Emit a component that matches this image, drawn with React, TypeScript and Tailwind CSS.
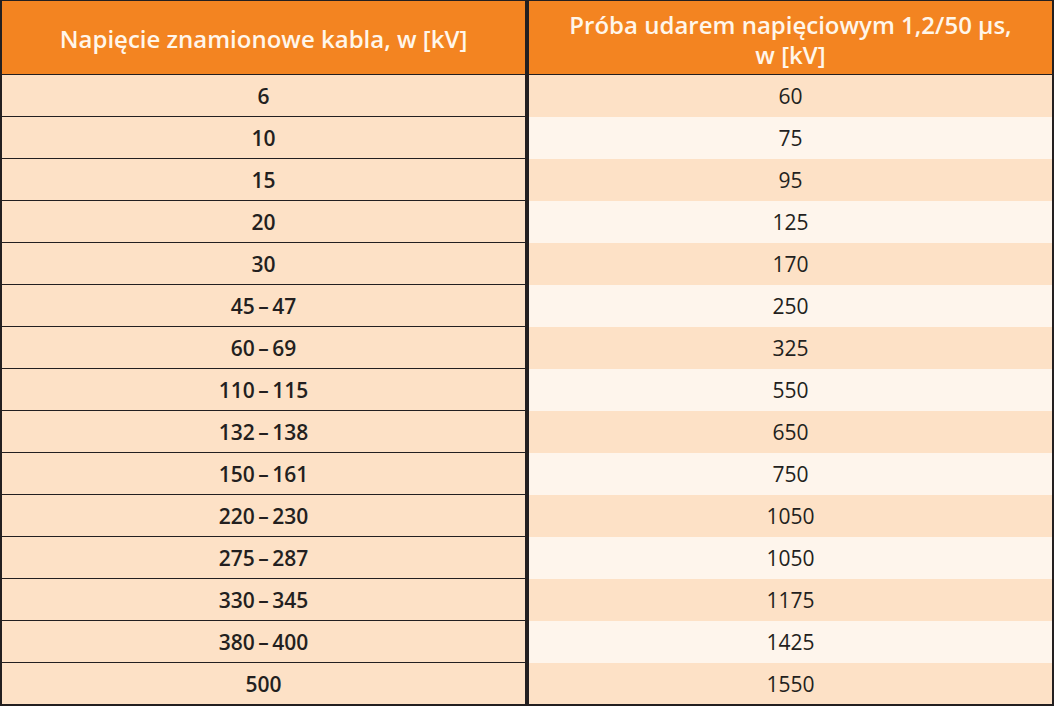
const rows: [string, string][] = [
  ["6", "60"],
  ["10", "75"],
  ["15", "95"],
  ["20", "125"],
  ["30", "170"],
  ["45\u2009–\u200947", "250"],
  ["60\u2009–\u200969", "325"],
  ["110\u2009–\u2009115", "550"],
  ["132\u2009–\u2009138", "650"],
  ["150\u2009–\u2009161", "750"],
  ["220\u2009–\u2009230", "1050"],
  ["275\u2009–\u2009287", "1050"],
  ["330\u2009–\u2009345", "1175"],
  ["380\u2009–\u2009400", "1425"],
  ["500", "1550"],
];

export default function App() {
  return (
    <div
      className="w-[1054px] h-[707px] bg-white text-[#231f20]"
      style={{ fontFamily: '"Open Sans", "Noto Sans", sans-serif' }}
    >
      <div className="flex flex-col border-t border-l-2 border-r-2 border-b-2 border-[#231f20]">
        {/* header */}
        <div className="flex h-[74px] bg-[#f38421] border-b border-[#231f20] text-[#fff6ea] font-semibold text-[24px]">
          <div className="w-[523px] flex items-center justify-center pt-[2px]">
            Napięcie znamionowe kabla, w [kV]
          </div>
          <div className="w-[4px] bg-[#231f20]" />
          <div className="flex-1 flex flex-col items-center justify-center leading-[30px] text-center pt-[4px]">
            <span>Próba udarem napięciowym 1,2/50 µs,</span>
            <span>w [kV]</span>
          </div>
        </div>

        {/* body */}
        {rows.map(([kv, test], i) => {
          const last = i === rows.length - 1;
          return (
            <div key={i} className={last ? "flex h-[41px]" : "flex h-[42px]"}>
              <div
                className={
                  last
                    ? "w-[523px] flex items-center justify-center bg-[#fde1c6] font-semibold text-[21px] pt-[2px]"
                    : "w-[523px] flex items-center justify-center bg-[#fde1c6] border-b border-[#231f20] font-semibold text-[21px] pt-[2px]"
                }
              >
                {kv}
              </div>
              <div className="w-[4px] bg-[#231f20]" />
              <div
                className={
                  i % 2 === 0
                    ? "flex-1 flex items-center justify-center bg-[#fde1c6] text-[21px] pt-[2px]"
                    : "flex-1 flex items-center justify-center bg-[#fef5ec] text-[21px] pt-[2px]"
                }
              >
                {test}
              </div>
            </div>
          );
        })}
      </div>
    </div>
  );
}
